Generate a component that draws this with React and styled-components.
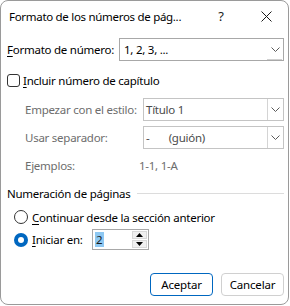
import React from "react";
import styled, { createGlobalStyle } from "styled-components";

const Global = createGlobalStyle`
  html, body { margin: 0; padding: 0; background: #ffffff; }
  body { font-family: "Noto Sans", "Open Sans", sans-serif; font-size: 11.5px; color: #000; }
`;

const Window = styled.div`
  box-sizing: border-box;
  width: 289px;
  height: 305px;
  border: 1px solid #9a9a9a;
  border-radius: 8px;
  background: #ffffff;
  display: flex;
  flex-direction: column;
  overflow: hidden;
`;

const TitleBar = styled.div`
  height: 30px;
  display: flex;
  align-items: center;
  padding-left: 8px;
`;

const Title = styled.div`
  flex: 1;
  font-size: 11.5px;
  letter-spacing: -0.3px;
  white-space: nowrap;
`;

const TitleButton = styled.div`
  width: ${({ w }) => w}px;
  display: flex;
  justify-content: center;
  align-items: center;
  font-size: 13px;
  color: #1a1a1a;
`;

const Body = styled.div`
  padding: 0 4px 0 6px;
  display: flex;
  flex-direction: column;
  flex: 1;
`;

const Row = styled.div`
  display: flex;
  align-items: center;
  height: ${({ h }) => h}px;
  margin-top: ${({ mt }) => mt || 0}px;
  padding-left: ${({ indent }) => indent || 0}px;
`;

const Label = styled.div`
  width: ${({ w }) => (w ? `${w}px` : "auto")};
  color: ${({ disabled }) => (disabled ? "#6d6d6d" : "#000")};
  white-space: nowrap;
  letter-spacing: -0.25px;
  flex-shrink: 0;
`;

const Select = styled.div`
  box-sizing: border-box;
  position: relative;
  flex: 1;
  height: 23px;
  border: 1px solid ${({ disabled }) => (disabled ? "#c4c4c4" : "#a8a8a8")};
  display: flex;
  align-items: center;
  color: ${({ disabled }) => (disabled ? "#4a4a4a" : "#000")};
  letter-spacing: -0.25px;
`;

const SelectValue = styled.div`
  flex: 1;
  padding-left: ${({ pl }) => pl || 4}px;
  white-space: pre;
`;

const SelectButton = styled.div`
  box-sizing: border-box;
  width: 16px;
  height: 100%;
  display: flex;
  align-items: center;
  justify-content: center;
  border-left: ${({ split }) => (split ? "1px solid #d4d4d4" : "none")};
`;

const Underbar = styled.div`
  position: absolute;
  right: 1px;
  bottom: 0;
  width: 15px;
  height: 1px;
  background: #d0d0d0;
`;

const Check = styled.div`
  box-sizing: border-box;
  width: 13px;
  height: 13px;
  border: 1px solid #333;
  border-radius: 3px;
  margin-right: 3px;
`;

const Radio = styled.div`
  box-sizing: border-box;
  width: 14px;
  height: 14px;
  border-radius: 50%;
  border: ${({ checked }) => (checked ? "none" : "1px solid #333")};
  background: ${({ checked }) => (checked ? "#0067c0" : "#fff")};
  display: flex;
  align-items: center;
  justify-content: center;
  margin-right: 4px;
  &::after {
    content: "";
    display: ${({ checked }) => (checked ? "block" : "none")};
    width: 6px;
    height: 6px;
    border-radius: 50%;
    background: #fff;
  }
`;

const GroupHeader = styled.div`
  display: flex;
  align-items: center;
  height: 16px;
  margin-top: ${({ mt }) => mt}px;
  gap: 6px;
`;

const Rule = styled.div`
  flex: 1;
  height: 1px;
  background: #dcdcdc;
`;

const Spin = styled.div`
  box-sizing: border-box;
  width: 57px;
  height: 21px;
  border: 1px solid #a8a8a8;
  display: flex;
  align-items: center;
  padding: 1px 1px 1px 2px;
`;

const SpinText = styled.div`
  flex: 1;
  display: flex;
  align-items: center;
`;

const Selected = styled.span`
  background: #8ec8f2;
  color: #1a1a1a;
  padding: 0 1px;
  line-height: 15px;
`;

const SpinButtons = styled.div`
  display: flex;
  flex-direction: column;
  gap: 1px;
  height: 100%;
`;

const SpinButton = styled.div`
  width: 15px;
  flex: 1;
  background: #f0f0f0;
  border: 1px solid #d8d8d8;
  box-sizing: border-box;
  display: flex;
  align-items: center;
  justify-content: center;
`;

const Footer = styled.div`
  display: flex;
  justify-content: flex-end;
  gap: 8px;
  margin-top: auto;
  padding-bottom: 8px;
`;

const Button = styled.button`
  box-sizing: border-box;
  width: 63px;
  height: 23px;
  border-radius: 4px;
  background: #fff;
  border: 1px solid ${({ primary }) => (primary ? "#0067c0" : "#d0d0d0")};
  font-family: inherit;
  font-size: 11.5px;
  letter-spacing: -0.2px;
  color: #000;
  padding: 0;
`;

const U = styled.span`
  text-decoration: underline;
  text-underline-offset: 2px;
`;

function Chevron() {
  return (
    <svg width="9" height="5" viewBox="0 0 9 5">
      <path d="M0.5 0.5 L4.5 4.5 L8.5 0.5" fill="none" stroke="#5a5a5a" strokeWidth="1" />
    </svg>
  );
}

function Arrow({ up }) {
  return (
    <svg width="7" height="4" viewBox="0 0 7 4">
      <path d={up ? "M0 4 L3.5 0 L7 4 Z" : "M0 0 L3.5 4 L7 0 Z"} fill="#000" />
    </svg>
  );
}

export default function App() {
  return (
    <>
      <Global />
      <Window>
        <TitleBar>
          <Title>Formato de los números de pág...</Title>
          <TitleButton w={46}>?</TitleButton>
          <TitleButton w={44}>
            <svg width="11" height="11" viewBox="0 0 11 11">
              <path d="M0.5 0.5 L10.5 10.5 M10.5 0.5 L0.5 10.5" stroke="#1a1a1a" strokeWidth="1" />
            </svg>
          </TitleButton>
        </TitleBar>
        <Body>
          <Row h={23} mt={7}>
            <Label w={112}>
              <U>F</U>ormato de número:
            </Label>
            <Select>
              <SelectValue>1, 2, 3, ...</SelectValue>
              <SelectButton>
                <Chevron />
              </SelectButton>
              <Underbar />
            </Select>
          </Row>
          <Row h={16} mt={11}>
            <Check />
            <Label>
              <U>I</U>ncluir número de capítulo
            </Label>
          </Row>
          <Row h={23} mt={10} indent={18}>
            <Label w={118} disabled>
              Empezar con el estilo:
            </Label>
            <Select disabled>
              <SelectValue pl={2}>Título 1</SelectValue>
              <SelectButton split>
                <Chevron />
              </SelectButton>
            </Select>
          </Row>
          <Row h={23} mt={5} indent={18}>
            <Label w={118} disabled>
              Usar separador:
            </Label>
            <Select disabled>
              <SelectValue pl={2}>{"-       (guión)"}</SelectValue>
              <SelectButton split>
                <Chevron />
              </SelectButton>
            </Select>
          </Row>
          <Row h={16} mt={8} indent={18}>
            <Label w={114} disabled>
              Ejemplos:
            </Label>
            <Label disabled>1-1, 1-A</Label>
          </Row>
          <GroupHeader mt={12}>
            <Label>Numeración de páginas</Label>
            <Rule />
          </GroupHeader>
          <Row h={16} mt={8} indent={7}>
            <Radio />
            <Label>
              <U>C</U>ontinuar desde la sección anterior
            </Label>
          </Row>
          <Row h={21} mt={4} indent={7}>
            <Radio checked />
            <Label w={60}>
              <U>I</U>niciar en:
            </Label>
            <Spin>
              <SpinText>
                <Selected>2</Selected>
              </SpinText>
              <SpinButtons>
                <SpinButton>
                  <Arrow up />
                </SpinButton>
                <SpinButton>
                  <Arrow />
                </SpinButton>
              </SpinButtons>
            </Spin>
          </Row>
          <Footer>
            <Button primary>Aceptar</Button>
            <Button>Cancelar</Button>
          </Footer>
        </Body>
      </Window>
    </>
  );
}
